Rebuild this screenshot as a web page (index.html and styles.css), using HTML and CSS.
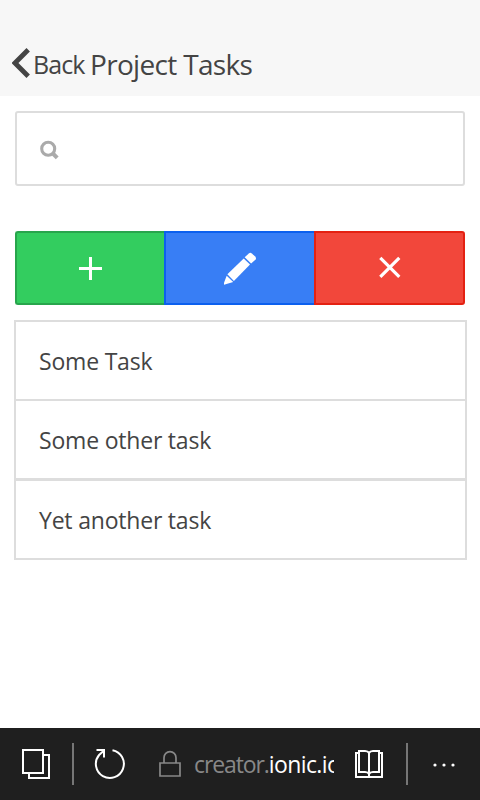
FILE: index.html
```html
<!DOCTYPE html>
<html lang="en">
<head>
<meta charset="utf-8">
<title>Project Tasks</title>
<link rel="stylesheet" href="styles.css">
</head>
<body>
<header class="header">
  <a class="back"><svg class="chevron" width="18" height="30" viewBox="0 0 18 30"><path d="M16.2 1.8 3 15l13.2 13.2" fill="none" stroke="#444" stroke-width="4.8"/></svg><span>Back</span></a>
  <h1 class="title">Project Tasks</h1>
</header>
<main class="content">
  <div class="search">
    <svg width="20" height="20" viewBox="0 0 20 20" fill="none" stroke="#aaa"><circle cx="9.2" cy="8.8" r="6.5" stroke-width="3.1"/><path d="m13.4 13 4.8 4.8" stroke-width="4"/></svg>
  </div>
  <div class="button-bar">
    <button class="button add" aria-label="Add"><svg width="36" height="36" viewBox="0 0 36 36"><path d="M6 17h10V7h3v10h10v3H19v10h-3V20H6z" fill="#fff"/></svg></button>
    <button class="button edit" aria-label="Edit"><svg width="36" height="36" viewBox="0 0 36 36" fill="#fff"><path d="m4.7 25.8 6.5 6.2-9.2 2.8 0-2z"/><path d="M5.4 24.3 21.7 8.4l6.3 6.1L11.9 30.9z"/><path d="m22.7 7.3 4.1-3.9q1.5-1.2 3 0l3.4 3.2q1.5 1.8.2 3.2l-4.3 3.8z"/></svg></button>
    <button class="button remove" aria-label="Delete"><svg width="36" height="36" viewBox="0 0 36 36"><path d="m8.3 7.9 19 19m0-19-19 19" stroke="#fff" stroke-width="3.2"/></svg></button>
  </div>
  <ul class="list">
    <li class="item task-first">Some Task</li>
    <li class="item task-second">Some other task</li>
    <li class="item task-third">Yet another task</li>
  </ul>
</main>
<footer class="browser-bar">
  <svg class="tabs" width="30" height="32" viewBox="0 0 30 32" fill="none" stroke="#fff" stroke-width="2"><path d="M2 2h20v23H2zM22 7h6v23H8v-5"/></svg>
  <i class="divider"></i>
  <svg class="reload" width="32" height="34" viewBox="0 0 32 34" fill="none" stroke="#fff" stroke-width="2"><path d="M19.5 4.2A14 14 0 1 1 6.1 9L11 4.5M3.5 4H11v7.5"/></svg>
  <svg class="lock" width="24" height="30" viewBox="0 0 24 30" fill="none" stroke="#888" stroke-width="1.7"><path d="M2 14h20v13H2zM6 14V8.7a6 6 0 0 1 12 0V14"/></svg>
  <div class="url">creator.<b>ionic.io</b></div>
  <svg class="book" width="30" height="30" viewBox="0 0 30 30" fill="none" stroke="#fff" stroke-width="2"><path d="M5 4H2v24h26V4h-3M15 25q-1-2-4-2H5V2h6q3 0 4 2 1-2 4-2h6v21h-6q-3 0-4 2zm0-21v23"/></svg>
  <i class="divider divider-right"></i>
  <svg class="more" width="24" height="4" viewBox="0 0 24 4" fill="#fff"><circle cx="2" cy="2" r="1.6"/><circle cx="11" cy="2" r="1.6"/><circle cx="20" cy="2" r="1.6"/></svg>
</footer>
</body>
</html>
```
FILE: styles.css
```css
* { box-sizing: border-box; }
body {
  margin: 0;
  height: 800px;
  display: flex;
  flex-direction: column;
  background: #fff;
  color: #444;
  font-family: "Open Sans", "Noto Sans", sans-serif;
}
.header {
  height: 96px;
  padding: 43px 0 0 12px;
  display: flex;
  background: #f7f7f7;
  line-height: 42px;
  white-space: nowrap;
}
.back { display: flex; width: 78px; font-size: 25px; letter-spacing: -0.9px; }
.chevron { margin: 5px 3px 0 0; flex: none; }
.title { margin: 0; font-size: 28px; font-weight: 400; letter-spacing: -0.68px; }
.content { flex: 1; padding: 15px 13px 0 14px; }
.search {
  height: 75px;
  margin: 0 2px 45px 1px;
  padding: 27px 0 0 22px;
  border: 2px solid #ddd;
  border-radius: 3px;
}
.search svg { display: block; }
.button-bar {
  display: grid;
  grid-template-columns: 149px 150px 151px;
  height: 74px;
  margin: 0 2px 15px 1px;
}
.button {
  display: flex;
  padding: 17px 0 0 56px;
  border: 2px solid;
}
.add { background: #33cd5f; border-color: #28a54c; border-right: 0; border-radius: 3px 0 0 3px; }
.edit { background: #387ef5; border-color: #0c60ee; border-right: 0; }
.remove { background: #f2473b; border-color: #e42112; border-radius: 0 3px 3px 0; }
.list { margin: 0; padding: 0; list-style: none; border: 2px solid #ddd; height: 240px; }
.item {
  padding-left: 23px;
  font-size: 23px;
  letter-spacing: -0.2px;
  line-height: 79px;
  white-space: nowrap;
}
.task-first { height: 79px; border-bottom: 2px solid #ddd; }
.task-second { height: 80px; border-bottom: 3px solid #ddd; }
.task-third { height: 77px; }
.browser-bar {
  height: 72px;
  flex: none;
  display: flex;
  align-items: center;
  padding-left: 21px;
  background: #1f1f1f;
}
.browser-bar svg { flex: none; }
.divider { width: 2px; height: 42px; margin-left: 21px; background: #767676; }
.reload { margin: -2px 0 0 19px; }
.lock { margin-left: 33px; }
.url {
  width: 140px;
  margin-left: 12px;
  overflow: hidden;
  white-space: nowrap;
  color: #888;
  font-size: 23px;
  letter-spacing: -1.1px;
}
.url b { font-weight: 400; color: #fff; letter-spacing: -0.6px; }
.book { margin-left: 20px; }
.divider-right { margin-left: 22px; }
.more { margin: 2px 0 0 25px; }
```
